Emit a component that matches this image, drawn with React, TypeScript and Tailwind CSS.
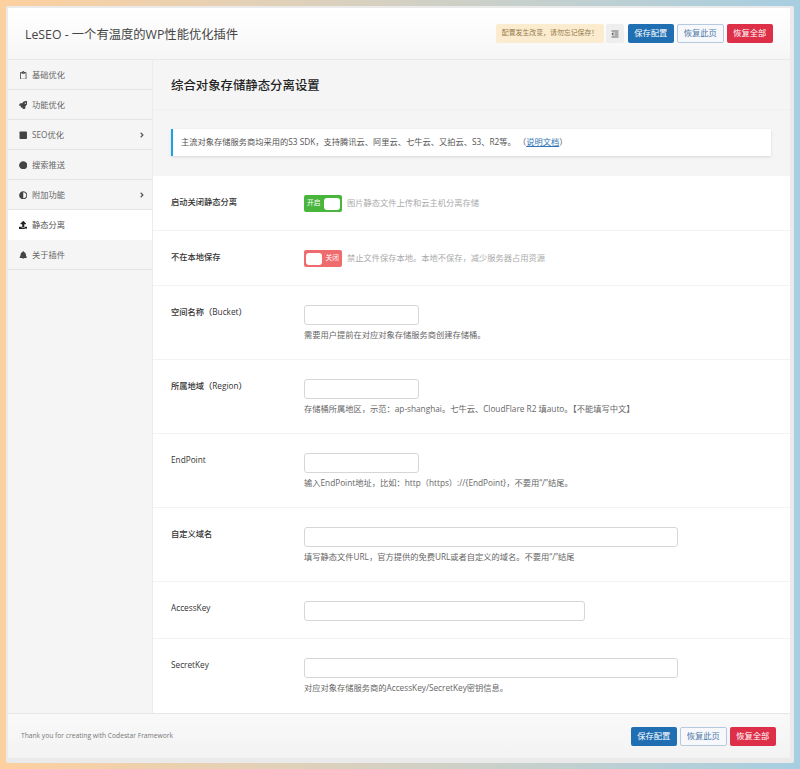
import type { ReactNode } from "react";
import {
  FaAdjust,
  FaAngleRight,
  FaBell,
  FaCircle,
  FaOutdent,
  FaRegClipboard,
  FaRocket,
  FaStop,
  FaUpload,
} from "react-icons/fa";

const font = "font-['Open_Sans','Noto_Sans_CJK_SC',sans-serif]";

const menu = [
  { label: "基础优化", icon: <FaRegClipboard /> },
  { label: "功能优化", icon: <FaRocket /> },
  { label: "SEO优化", icon: <FaStop />, more: true },
  { label: "搜索推送", icon: <FaCircle /> },
  { label: "附加功能", icon: <FaAdjust />, more: true },
  { label: "静态分离", icon: <FaUpload />, active: true },
  { label: "关于插件", icon: <FaBell /> },
];

function Buttons() {
  return (
    <div className="flex gap-[3px] text-[8.25px] leading-none">
      <button type="button" className="h-[19px] w-[46.5px] rounded-[2px] bg-[#1f6fb2] text-white">
        保存配置
      </button>
      <button
        type="button"
        className="h-[19px] w-[46.5px] rounded-[2px] border border-[#b5c9e0] bg-[#f6f8fb] text-[#4f79a8]"
      >
        恢复此页
      </button>
      <button type="button" className="h-[19px] w-[46.5px] rounded-[2px] bg-[#dd3048] text-white">
        恢复全部
      </button>
    </div>
  );
}

function Toggle({ on }: { on: boolean }) {
  return (
    <span
      className={
        on
          ? "flex h-[17px] w-[38px] items-center justify-between rounded-[2px] bg-[#4ab53c] pl-[3px] pr-[2px] text-[6.75px] text-white"
          : "flex h-[17px] w-[38px] items-center justify-between rounded-[2px] bg-[#ee6b6e] pl-[2px] pr-[3px] text-[6.75px] text-white"
      }
    >
      {on ? "开启" : <span className="h-[12px] w-[16px] rounded-[3px] bg-white" />}
      {on ? <span className="h-[12px] w-[16px] rounded-[3px] bg-white" /> : "关闭"}
    </span>
  );
}

function Field({
  label,
  height,
  children,
  last,
}: {
  label: string;
  height: string;
  children: ReactNode;
  last?: boolean;
}) {
  return (
    <div className={`flex bg-white pl-[18px] pt-[19px] ${height} ${last ? "" : "border-b border-[#f3f3f3]"}`}>
      <div className="w-[133px] shrink-0 text-[8.25px] leading-[13px] font-medium text-[#333]">{label}</div>
      <div>{children}</div>
    </div>
  );
}

function TextInput({ width }: { width: string }) {
  return <input type="text" className={`block h-[20px] rounded-[3px] border border-[#d6d6d6] bg-white ${width}`} />;
}

function Hint({ children }: { children: ReactNode }) {
  return <p className="mt-[3px] text-[8.25px] leading-[13px] whitespace-nowrap text-[#666]">{children}</p>;
}

export default function App() {
  return (
    <div className={`h-[769px] w-[800px] overflow-hidden bg-gradient-to-r from-[#fdd09f] to-[#a6cee1] pt-[6px] pl-[6px] ${font}`}>
      <div className="h-[757px] w-[788px] rounded-[2px] bg-[#eaeaea] pt-[2px] pr-[4px] pb-[5px] pl-[2px]">
        <div className="flex h-full flex-col bg-white">
          <header className="flex h-[52px] shrink-0 items-center justify-between border-b border-[#e8e8e8] bg-gradient-to-b from-white to-[#f6f6f6] pr-[17px] pl-[17px]">
            <h1 className="pt-[4px] text-[12.3px] whitespace-nowrap text-[#444]">LeSEO - 一个有温度的WP性能优化插件</h1>
            <div className="flex items-center">
              <span className="flex h-[19px] w-[108px] items-center justify-center rounded-[2px] bg-[#fbeccf] text-[6.9px] whitespace-nowrap text-[#94794a]">
                配置发生改变，请勿忘记保存！
              </span>
              <span className="mr-[3.5px] ml-[2px] flex h-[19px] w-[18px] items-center justify-center rounded-[2px] bg-[#eeeeee] text-[8px] text-[#666]">
                <FaOutdent />
              </span>
              <Buttons />
            </div>
          </header>

          <div className="flex min-h-0 flex-1">
            <nav className="w-[145px] shrink-0 border-r border-[#ececec] bg-[#f5f5f5]">
              {menu.map((item) => (
                <div
                  key={item.label}
                  className={
                    item.active
                      ? "flex h-[30px] items-center border-b border-white bg-white pt-[1px] pr-[6px] pl-[10.5px] text-[8.25px] text-[#555]"
                      : "flex h-[30px] items-center border-b border-[#e4e4e4] pt-[1px] pr-[6px] pl-[10.5px] text-[8.25px] text-[#666]"
                  }
                >
                  <span className={item.active ? "w-[13.5px] text-[8.5px] text-[#222]" : "w-[13.5px] text-[8.5px] text-[#444]"}>
                    {item.icon}
                  </span>
                  <span className="flex-1">{item.label}</span>
                  {item.more && <FaAngleRight className="text-[8px] text-[#555]" />}
                </div>
              ))}
            </nav>

            <main className="min-w-0 flex-1 bg-white">
              <div className="flex h-[50px] items-center border-b border-[#f0f0f0] bg-[#f5f5f5] pt-[4px] pl-[18px]">
                <h2 className="text-[12.4px] font-medium text-[#222]">综合对象存储静态分离设置</h2>
              </div>
              <div className="h-[66px] bg-[#f5f5f5] pt-[19px] pr-[19px] pl-[18px]">
                <div className="flex h-[27px] items-center border-l-2 border-[#1da1e2] bg-white pl-[8px] text-[8.25px] whitespace-pre text-[#555] shadow-sm">
                  主流对象存储服务商均采用的S3 SDK，支持腾讯云、阿里云、七牛云、又拍云、S3、R2等。 （
                  <span className="text-[#2f75b5] underline">说明文档</span>）
                </div>
              </div>

              <Field label="启动关闭静态分离" height="h-[55px]">
                <div className="flex items-center gap-[5px]">
                  <Toggle on />
                  <span className="text-[8.25px] text-[#aaa]">图片静态文件上传和云主机分离存储</span>
                </div>
              </Field>
              <Field label="不在本地保存" height="h-[55px]">
                <div className="flex items-center gap-[5px]">
                  <Toggle on={false} />
                  <span className="text-[8.25px] text-[#aaa]">禁止文件保存本地。本地不保存，减少服务器占用资源</span>
                </div>
              </Field>
              <Field label="空间名称（Bucket）" height="h-[74px]">
                <TextInput width="w-[115px]" />
                <Hint>需要用户提前在对应对象存储服务商创建存储桶。</Hint>
              </Field>
              <Field label="所属地域（Region）" height="h-[74px]">
                <TextInput width="w-[115px]" />
                <Hint>存储桶所属地区，示范：ap-shanghai。七牛云、CloudFlare R2 填auto。【不能填写中文】</Hint>
              </Field>
              <Field label="EndPoint" height="h-[74px]">
                <TextInput width="w-[115px]" />
                <Hint>输入EndPoint地址，比如：http（https）://{"{EndPoint}"}，不要用“/”结尾。</Hint>
              </Field>
              <Field label="自定义域名" height="h-[74px]">
                <TextInput width="w-[374px]" />
                <Hint>填写静态文件URL，官方提供的免费URL或者自定义的域名。不要用“/”结尾</Hint>
              </Field>
              <Field label="AccessKey" height="h-[57px]">
                <TextInput width="w-[281px]" />
              </Field>
              <Field label="SecretKey" height="h-[73px]" last>
                <TextInput width="w-[374px]" />
                <Hint>对应对象存储服务商的AccessKey/SecretKey密钥信息。</Hint>
              </Field>
            </main>
          </div>

          <footer className="flex h-[45px] shrink-0 items-center justify-between border-t border-[#e6e6e6] bg-gradient-to-b from-[#f9f9f9] to-[#f3f3f3] pr-[14px] pl-[13px]">
            <span className="text-[6.7px] text-[#777]">Thank you for creating with Codestar Framework</span>
            <Buttons />
          </footer>
        </div>
      </div>
    </div>
  );
}
